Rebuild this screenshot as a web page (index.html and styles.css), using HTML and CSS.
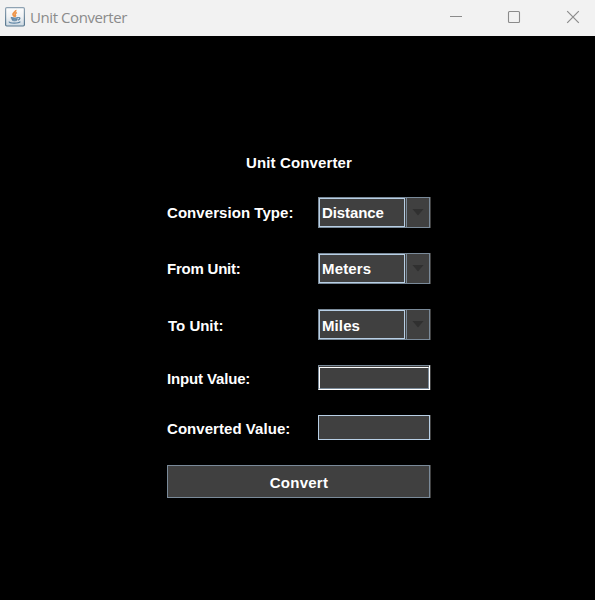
FILE: index.html
```html
<!DOCTYPE html>
<html lang="en">
<head>
<meta charset="utf-8">
<title>Unit Converter</title>
<link rel="stylesheet" href="styles.css">
</head>
<body>
<div class="window">
  <header class="titlebar">
    <svg class="app-icon" width="20" height="20" viewBox="0 0 20 20">
      <defs><linearGradient id="face" x1="0" y1="0" x2="0" y2="1"><stop offset="0" stop-color="#fdfdfd"/><stop offset=".5" stop-color="#f0f2f4"/><stop offset="1" stop-color="#cbd8e2"/></linearGradient>
      <linearGradient id="edge" x1="0" y1="0" x2="0" y2="1"><stop offset="0" stop-color="#8fa3b3"/><stop offset="1" stop-color="#56768e"/></linearGradient></defs>
      <rect x=".6" y=".6" width="18.8" height="18.4" rx="1.2" fill="url(#face)" stroke="url(#edge)" stroke-width="1.2"/>
      <path d="M10.800 3c.4 1.700-3.300 2.600-2.800 4.500.2 1 1.500 1.400 1.500 2.500M11.800 5.500c-1.500.7-2.200 1.500-1.500 2.500.5.700.1 1.200-.3 1.700" fill="none" stroke="#ee9549" stroke-width="1.700"/>
      <path d="M5.800 10.500c2 .7 5.400.6 7.200-.1l-1 3.600c-1.500.5-3.300.5-4.700 0z" fill="#91abc0"/>
      <path d="M5.800 10.600c2 .6 5.400.5 7.200-.1M6.800 12.500c1.700.6 4 .6 5.600 0M13.200 10.600c2.500-.5 2.100 1.900-.2 2.500M4 14.600c.4 1.900 9.600 1.900 11.400 0" fill="none" stroke="#5b82a2" stroke-width="1.200"/>
    </svg>
    <span class="caption">Unit Converter</span>
    <svg class="controls" width="131" height="14" viewBox="0 0 131 14" fill="none" stroke="#8b8b8b">
      <path d="M0 6.500h12"/>
      <rect x="58.500" y="1.500" width="11" height="11" rx="1" stroke-width="1.100"/>
      <path d="M117.200 1.200l11.600 11.600M128.800 1.200l-11.600 11.600" stroke-width="1.200"/>
    </svg>
  </header>
  <main class="content">
    <form class="form">
      <h1 class="heading">Unit Converter</h1>
      <span class="label label-type">Conversion Type:</span>
      <div class="combo"><span class="value">Distance</span><span class="drop"><i class="arrow"></i></span></div>
      <span class="label label-from">From Unit:</span>
      <div class="combo"><span class="value value-from">Meters</span><span class="drop"><i class="arrow"></i></span></div>
      <span class="label label-to">To Unit:</span>
      <div class="combo combo-to"><span class="value">Miles</span><span class="drop"><i class="arrow"></i></span></div>
      <label class="label label-input" for="input">Input Value:</label>
      <div class="entry"><input class="field" id="input" type="text"></div>
      <label class="label label-output" for="output">Converted Value:</label>
      <input class="field result" id="output" type="text" readonly>
      <button class="convert" type="button">Convert</button>
    </form>
  </main>
</div>
</body>
</html>
```

FILE: styles.css
```css
* { box-sizing: border-box; }
body { margin: 0; background: #000; }
.window { height: 600px; display: flex; flex-direction: column; overflow: hidden; }
.titlebar {
  height: 36px;
  flex: none;
  display: flex;
  align-items: center;
  padding: 0 14px 2px 5px;
  background: #f2f2f2;
}
.caption { margin-left: 5px; font: 15px/20px "Open Sans", sans-serif; letter-spacing: -0.42px; color: #8b8b8b; }
.controls { margin-left: auto; }
.content { flex: 1; padding: 117px 0 0 167px; background: #000; }
.form {
  width: 263px;
  display: grid;
  grid-template-columns: 151px 112px;
  grid-template-rows: 19px 31px 31px 31px 25px 25px 33px;
  row-gap: 25px;
  align-items: center;
  font: bold 15px/19px "Liberation Sans", Arial, sans-serif;
  color: #fff;
}
.heading { grid-column: 1 / -1; margin: 0; padding-left: 1px; font: inherit; letter-spacing: 0.12px; text-align: center; }
.label-type { letter-spacing: 0.06px; }
.label-from { letter-spacing: -0.22px; }
.label-to { padding: 2px 0 0 1px; }
.label-input { padding-top: 2px; letter-spacing: -0.15px; }
.label-output { padding-top: 2px; letter-spacing: 0.05px; }
.combo, .entry, .result, .convert { box-shadow: 1px 0 #404040; }
.combo {
  height: 31px;
  display: flex;
  background: #404040;
  border: 1px solid #7a8a99;
}
.value { width: 86px; margin-right: 1px; padding: 4px 0 0 2px; border: 1px solid #b8cfe5; letter-spacing: -0.08px; }
.value-from { letter-spacing: 0.15px; }
.combo-to .value { padding-top: 5px; letter-spacing: 0.1px; }
.drop { flex: 1; display: flex; align-items: center; justify-content: center; border-left: 1px solid #7a8a99; }
.arrow { width: 12px; height: 7px; margin-bottom: 1px; background: #303030; clip-path: polygon(0 0, 100% 0, 50% 100%); }
.entry { height: 25px; padding: 1px 0 0; background: #404040; border: 1px solid #7a8a99; border-right-color: #fff; border-bottom-color: #fff; }
.field { display: block; width: 100%; height: 100%; margin: 0; padding: 0 2px; background: #404040; border: 1px solid #fff; border-right-color: #7a8a99; border-bottom-color: #7a8a99; border-radius: 0; color: #fff; font: inherit; outline: 0; }
.result { height: 25px; border-color: #b8cfe5; }
.convert { grid-column: 1 / -1; height: 33px; margin: 0; padding: 2px 0 0 1px; background: #404040; border: 1px solid #7a8a99; border-radius: 0; color: #fff; font: inherit; letter-spacing: 0.25px; }
```
